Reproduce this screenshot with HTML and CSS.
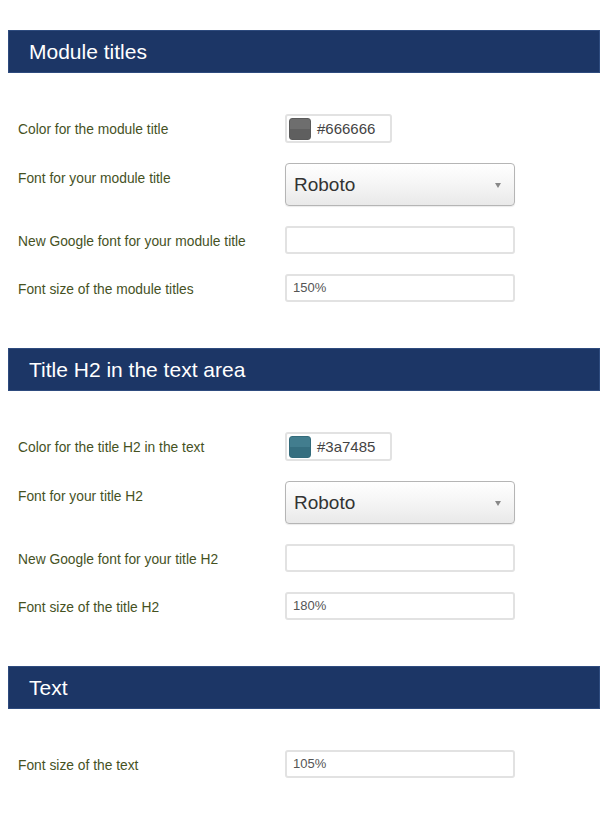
FILE: index.html
```html
<!DOCTYPE html>
<html>
<head>
<meta charset="utf-8">
<link rel="stylesheet" href="styles.css">
</head>
<body>
<div class="page">
  <section class="section">
    <h2 class="bar">Module titles</h2>
    <div class="rows">
      <div class="row">
        <label class="label">Color for the module title</label>
        <div class="color-input"><span class="swatch swatch-grey"></span><span class="color-text">#666666</span></div>
      </div>
      <div class="row">
        <label class="label">Font for your module title</label>
        <div class="select"><span>Roboto</span><span class="arrow"></span></div>
      </div>
      <div class="row">
        <label class="label">New Google font for your module title</label>
        <div class="text-input"></div>
      </div>
      <div class="row">
        <label class="label">Font size of the module titles</label>
        <div class="text-input">150%</div>
      </div>
    </div>
  </section>
  <section class="section">
    <h2 class="bar">Title H2 in the text area</h2>
    <div class="rows">
      <div class="row">
        <label class="label">Color for the title H2 in the text</label>
        <div class="color-input"><span class="swatch swatch-teal"></span><span class="color-text">#3a7485</span></div>
      </div>
      <div class="row">
        <label class="label">Font for your title H2</label>
        <div class="select"><span>Roboto</span><span class="arrow"></span></div>
      </div>
      <div class="row">
        <label class="label">New Google font for your title H2</label>
        <div class="text-input"></div>
      </div>
      <div class="row">
        <label class="label">Font size of the title H2</label>
        <div class="text-input">180%</div>
      </div>
    </div>
  </section>
  <section class="section">
    <h2 class="bar">Text</h2>
    <div class="rows">
      <div class="row">
        <label class="label">Font size of the text</label>
        <div class="text-input">105%</div>
      </div>
    </div>
  </section>
</div>
</body>
</html>
```
FILE: styles.css
```css
html, body {
  margin: 0;
  padding: 0;
  background: #fff;
}
body {
  font-family: "Liberation Sans", Arial, sans-serif;
  padding: 30px 0 0 8px;
  overflow: hidden;
}
.page {
  display: flex;
  flex-direction: column;
  gap: 46px;
}
.bar {
  margin: 0;
  height: 43px;
  box-sizing: border-box;
  background: #1c3666;
  border: 1px solid #2e4b7e;
  color: #fff;
  font-weight: normal;
  font-size: 21px;
  line-height: 41px;
  padding-left: 20px;
}
.rows {
  display: flex;
  flex-direction: column;
  gap: 20px;
  padding: 41px 0 0 10px;
}
.row {
  display: flex;
  align-items: flex-start;
}
.label {
  width: 267px;
  flex-shrink: 0;
  font-size: 13.8px;
  line-height: 16px;
  padding-top: 8px;
  color: #46521f;
  white-space: nowrap;
}
.color-input {
  width: 107px;
  height: 29px;
  box-sizing: border-box;
  border: 2px solid #e2e2e2;
  border-radius: 3px;
  display: flex;
  align-items: center;
  padding-left: 2px;
  gap: 6px;
}
.swatch {
  width: 22px;
  height: 22px;
  border-radius: 3px;
  box-sizing: border-box;
}
.swatch-grey {
  background: linear-gradient(#6e6e6e 0, #6e6e6e 50%, #5f5f5f 50%, #5f5f5f 100%);
  border: 1px solid #5a5a5a;
}
.swatch-teal {
  background: linear-gradient(#427d8e 0, #427d8e 50%, #356e7f 50%, #356e7f 100%);
  border: 1px solid #336b7b;
}
.color-text {
  font-size: 15px;
  color: #444;
}
.select {
  width: 230px;
  height: 43px;
  box-sizing: border-box;
  border: 1px solid #b5b5b5;
  border-radius: 4px;
  background: linear-gradient(#ffffff, #f6f6f6 45%, #e9e9e9);
  box-shadow: 0 1px 1px rgba(0,0,0,0.08);
  display: flex;
  align-items: center;
  justify-content: space-between;
  padding: 0 13px 0 8px;
  font-size: 19px;
  color: #333;
}
.arrow {
  width: 0;
  height: 0;
  border-left: 3px solid transparent;
  border-right: 3px solid transparent;
  border-top: 5px solid #888;
  margin-top: 1px;
}
.text-input {
  width: 230px;
  height: 28px;
  box-sizing: border-box;
  border: 2px solid #e2e2e2;
  border-radius: 3px;
  font-size: 13px;
  line-height: 24px;
  padding-left: 6px;
  color: #555;
}
```
